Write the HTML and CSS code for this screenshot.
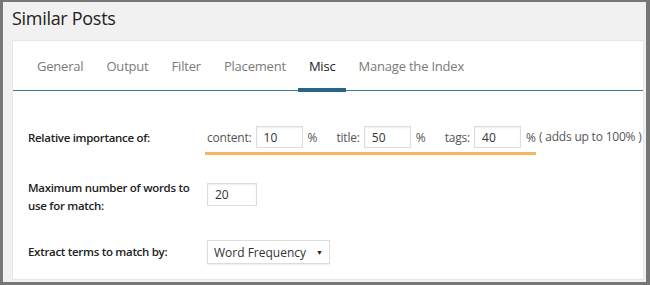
FILE: index.html
```html
<!DOCTYPE html>
<html lang="en">
<head>
    <meta charset="UTF-8">
    <title>Similar Posts</title>
    <link rel="stylesheet" href="styles.css">
</head>
<body>
    <div class="frame">
        <h1 class="page-title">Similar Posts</h1>
        <div class="panel">
            <ul class="tabs">
                <li>General</li>
                <li>Output</li>
                <li>Filter</li>
                <li>Placement</li>
                <li class="active">Misc</li>
                <li>Manage the Index</li>
            </ul>
            <div class="form">
                <div class="row row-weights">
                    <div class="label">Relative importance of:</div>
                    <div class="field">
                        <span class="highlight">
                            <span class="txt">content:</span>
                            <input class="num" type="text" value="10">
                            <span class="pct">%</span>
                            <span class="txt">title:</span>
                            <input class="num" type="text" value="50">
                            <span class="pct">%</span>
                            <span class="txt">tags:</span>
                            <input class="num" type="text" value="40">
                            <span class="pct last">%</span>
                        </span>
                        <span class="txt note">( adds up to 100% )</span>
                    </div>
                </div>
                <div class="row row-words">
                    <div class="label">Maximum number of words to use for match:</div>
                    <div class="field">
                        <input class="num wide" type="text" value="20">
                    </div>
                </div>
                <div class="row row-terms">
                    <div class="label">Extract terms to match by:</div>
                    <div class="field">
                        <div class="select">
                            <span>Word Frequency</span>
                            <span class="arrow">&#9660;</span>
                        </div>
                    </div>
                </div>
            </div>
        </div>
    </div>
</body>
</html>
```
FILE: styles.css
```css
*{
    margin: 0;
    padding: 0;
    box-sizing: border-box;
}
li{
    list-style: none;
}
body{
    background-color: #fff;
    font-family: "Open Sans", "Noto Sans", sans-serif;
}
.frame{
    width: 650px;
    height: 285px;
    background-color: #f1f1f1;
    border: 3px solid #777;
    border-top-width: 2px;
    border-right-width: 4px;
    display: flex;
    flex-direction: column;
    padding: 0 2px 2px 9px;
}
.page-title{
    font-size: 18px;
    font-weight: 400;
    color: #222;
    line-height: 24px;
    height: 38px;
    padding-top: 4px;
    letter-spacing: -0.3px;
}
.panel{
    flex: 1;
    background-color: #fff;
    border: 1px solid #e6e6e6;
}
.tabs{
    display: flex;
    padding-left: 13px;
    border-bottom: 1px solid #3f7c9b;
    height: 50px;
}
.tabs li{
    font-size: 13px;
    color: #7a7a7a;
    padding: 15px 11px 0;
    line-height: 20px;
    letter-spacing: -0.2px;
    border-bottom: 4px solid transparent;
    margin-bottom: -2px;
}
.tabs li + li{
    margin-left: 1px;
}
.tabs .active{
    color: #222;
    border-bottom-color: #2a6489;
}
.form{
    padding: 35px 0 0 15px;
}
.row{
    display: flex;
}
.label{
    width: 179px;
    font-size: 11.5px;
    font-weight: 600;
    color: #222;
    line-height: 18px;
    letter-spacing: -0.3px;
}
.row-weights{
    align-items: flex-start;
}
.row-weights .label{
    padding-top: 3px;
}
.field{
    display: flex;
    align-items: flex-start;
    font-size: 12px;
    color: #555;
    white-space: nowrap;
}
.highlight{
    display: flex;
    align-items: center;
    padding-bottom: 4px;
    border-bottom: 3px solid #f1b75e;
    margin-left: -2px;
    padding-left: 2px;
}
.txt{
    letter-spacing: -0.2px;
}
.note{
    line-height: 22px;
    margin-left: 3px;
}
.num{
    width: 47px;
    height: 22px;
    border: 1px solid #ddd;
    box-shadow: inset 0 1px 2px rgba(0,0,0,.07);
    font-family: inherit;
    font-size: 12px;
    color: #333;
    padding-left: 7px;
    outline: none;
    margin-left: 4px;
}
.pct{
    margin: 0 19px 0 5px;
}
.pct.last{
    margin-right: 0;
}
.row-words{
    margin-top: 24px;
}
.row-words .label{
    width: 170px;
    margin-right: 9px;
}
.num.wide{
    width: 50px;
    height: 23px;
    margin: 4px 0 0;
}
.row-terms{
    margin-top: 25px;
    align-items: center;
}
.select{
    width: 123px;
    height: 24px;
    border: 1px solid #ddd;
    box-shadow: 0 1px 1px rgba(0,0,0,.05);
    display: flex;
    align-items: center;
    justify-content: space-between;
    padding: 0 6px 0 6px;
    font-size: 12px;
    color: #333;
}
.arrow{
    font-size: 7px;
    color: #222;
}
```
